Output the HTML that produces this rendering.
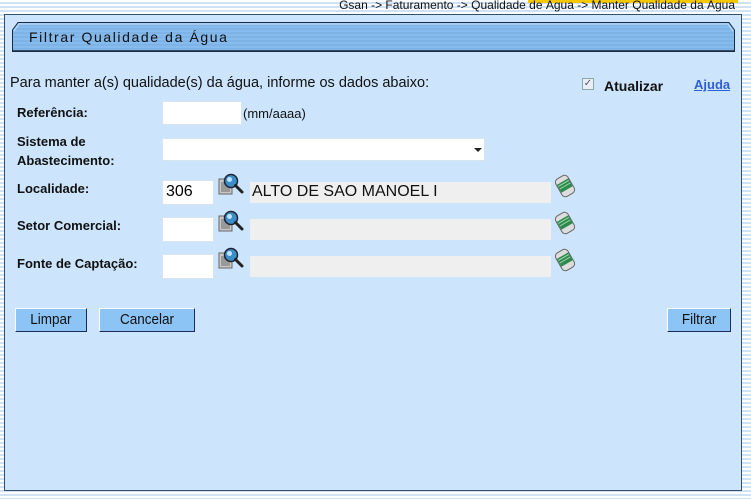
<!DOCTYPE html>
<html><head><meta charset="utf-8">
<style>
*{margin:0;padding:0;box-sizing:border-box}
body{width:751px;height:499px;overflow:hidden;font-family:"Liberation Sans",Arial,sans-serif;
background:repeating-linear-gradient(#fff 0,#fff 2px,#cfe3f5 2px,#cfe3f5 4px);position:relative}
.abs{position:absolute}
.crumb{top:-2px;right:16px;font-size:12px;color:#111;white-space:nowrap}
.hl{left:528px;top:0;width:210px;height:3px;background:#f5c800}
.panel{left:4px;top:14px;width:738px;height:477px;background:#cce5fc;border:1px solid #37506a}
.title{left:12px;top:22px;width:723px;height:30px}
.title span{position:absolute;left:17px;top:7px;font-size:14px;letter-spacing:1.6px;color:#111}
.lbl{font-size:13px;font-weight:bold;color:#111}
.txt{font-size:13px;color:#111}
.inp{background:#fff;border:1px solid #d8e4ee}
.gray{background:#efefef}
.btn{background:#8cc4f6;border:1px solid;border-color:#fff #1d2a5a #1d2a5a #fff;font-size:15px;color:#111;text-align:center;line-height:21px;height:24px}
.btn i{font-style:normal;display:inline-block;transform:scaleX(.9)}
</style></head><body>
<div class="abs hl"></div>
<div class="abs crumb">Gsan -&gt; Faturamento -&gt; Qualidade de Água -&gt; Manter Qualidade da Água</div>
<div class="abs panel"></div>
<svg class="abs title" width="723" height="30" viewBox="0 0 723 30">
<defs><pattern id="st" width="4" height="4" patternUnits="userSpaceOnUse"><rect width="4" height="2" fill="#86bbee"/><rect y="2" width="4" height="2" fill="#7fb3e6"/></pattern></defs>
<path d="M0.5 8 L6 0.5 H717 L722.5 8 V29.5 H0.5 Z" fill="url(#st)" stroke="#1a2a40"/>
<path d="M2 9 L7 2 H716 L721 9" fill="none" stroke="#c8e2fa"/>
<path d="M1 29 H722" stroke="#1a2a40" stroke-width="1.5"/>
</svg>
<div class="abs title"><span>Filtrar Qualidade da Água</span></div>

<div class="abs txt" style="left:10px;top:75px;font-size:14.5px;white-space:nowrap">Para manter a(s) qualidade(s) da água, informe os dados abaixo:</div>
<div class="abs" style="left:582px;top:78px;width:12px;height:12px;border:1px solid #8aa;background:#e8eef4;font-size:10px;line-height:10px;text-align:center;color:#556">✓</div>
<div class="abs lbl" style="left:604px;top:78px;font-size:14px">Atualizar</div>
<div class="abs lbl" style="left:694px;top:77px;color:#2f5fcf;text-decoration:underline">Ajuda</div>

<div class="abs lbl" style="left:17px;top:105px">Referência:</div>
<div class="abs inp" style="left:162px;top:101px;width:80px;height:24px"></div>
<div class="abs txt" style="left:243px;top:106px">(mm/aaaa)</div>

<div class="abs lbl" style="left:17px;top:132px;line-height:19px">Sistema de<br>Abastecimento:</div>
<div class="abs inp" style="left:162px;top:138px;width:323px;height:23px"></div>
<div class="abs" style="left:474px;top:148px;border:4px solid transparent;border-top:4px solid #222;border-bottom:0"></div>

<div class="abs lbl" style="left:17px;top:181px">Localidade:</div>
<div class="abs inp" style="left:162px;top:180px;width:52px;height:25px"></div>
<div class="abs" style="left:166px;top:183px;font-size:16px">306</div>
<div class="abs gray" style="left:250px;top:182px;width:301px;height:21px"></div>
<div class="abs" style="left:252px;top:183px;font-size:16px;color:#111">ALTO DE SAO MANOEL I</div>

<div class="abs lbl" style="left:17px;top:218px">Setor Comercial:</div>
<div class="abs inp" style="left:162px;top:217px;width:52px;height:25px"></div>
<div class="abs gray" style="left:250px;top:219px;width:301px;height:21px"></div>

<div class="abs lbl" style="left:17px;top:256px">Fonte de Captação:</div>
<div class="abs inp" style="left:162px;top:254px;width:52px;height:25px"></div>
<div class="abs gray" style="left:250px;top:256px;width:301px;height:21px"></div>

<svg width="0" height="0" style="position:absolute"><defs>
<g id="mg"><rect x="1" y="6" width="13" height="15" fill="#c8c8c8" stroke="#666"/><rect x="3" y="9" width="9" height="10" fill="#999"/>
<circle cx="13" cy="8" r="6.5" fill="#3a8fc8" stroke="#223" stroke-width="1.5"/><circle cx="11.5" cy="6.5" r="2.5" fill="#bfe4ff"/>
<path d="M17.5 12.5 L24 19" stroke="#222" stroke-width="3" stroke-linecap="round"/></g>
<g id="er"><g transform="rotate(-30 10 12)"><rect x="3" y="2" width="14" height="20" rx="4" fill="#ddd" stroke="#666"/>
<rect x="3.5" y="7" width="13" height="9" fill="#2f8a4e"/><path d="M4 9 H16 M4 12 H16" stroke="#9fdcaf"/></g></g>
</defs></svg>
<svg class="abs" style="left:218px;top:173px" width="26" height="24"><use href="#mg"/></svg>
<svg class="abs" style="left:218px;top:210px" width="26" height="24"><use href="#mg"/></svg>
<svg class="abs" style="left:218px;top:247px" width="26" height="24"><use href="#mg"/></svg>
<svg class="abs" style="left:555px;top:174px" width="24" height="24"><use href="#er"/></svg>
<svg class="abs" style="left:555px;top:211px" width="24" height="24"><use href="#er"/></svg>
<svg class="abs" style="left:555px;top:248px" width="24" height="24"><use href="#er"/></svg>

<div class="abs btn" style="left:15px;top:308px;width:72px"><i>Limpar</i></div>
<div class="abs btn" style="left:99px;top:308px;width:96px"><i>Cancelar</i></div>
<div class="abs btn" style="left:667px;top:308px;width:64px"><i>Filtrar</i></div>
</body></html>
